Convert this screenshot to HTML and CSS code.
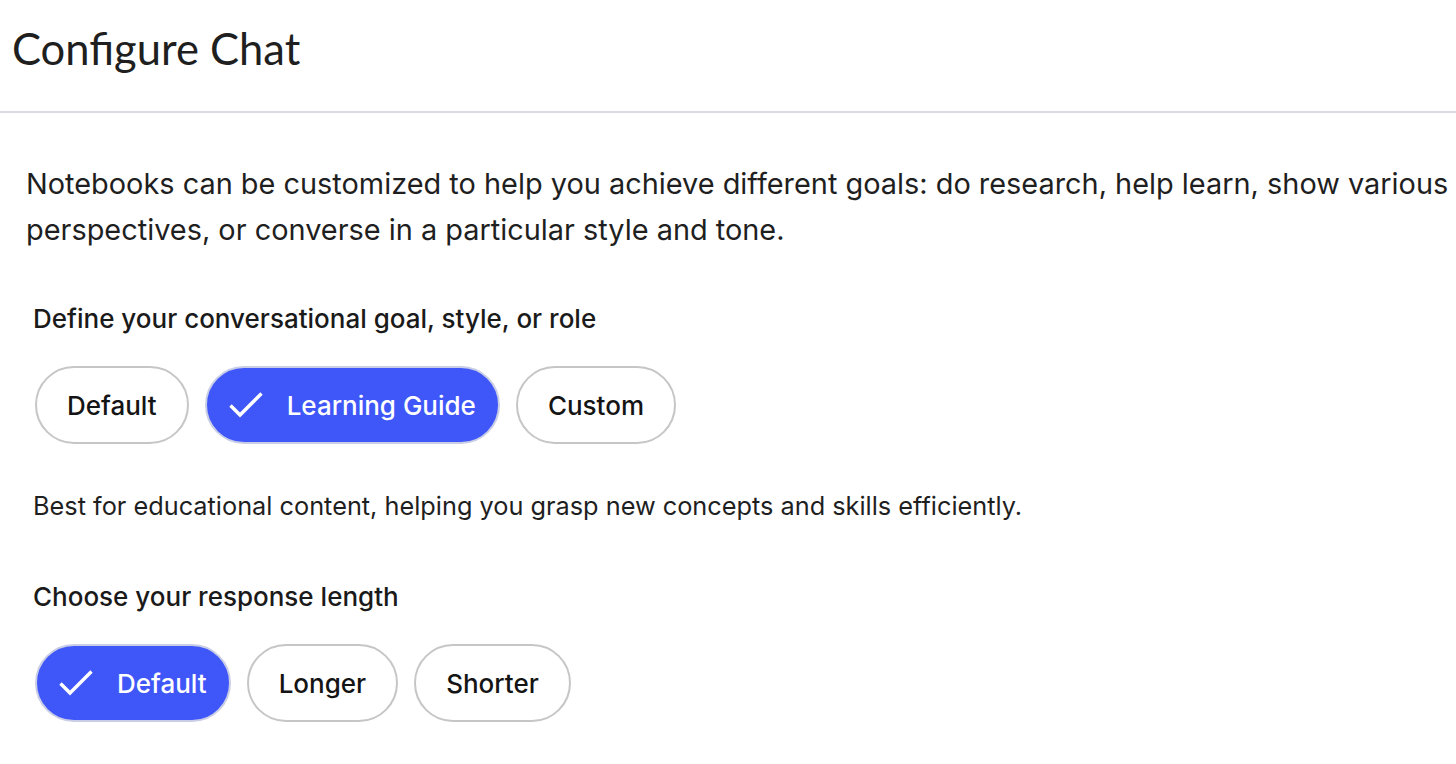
FILE: index.html
```html
<!DOCTYPE html>
<html lang="en">
<head>
<meta charset="utf-8">
<title>Configure Chat</title>
<link rel="stylesheet" href="styles.css">
</head>
<body>
<div class="dialog">
  <header class="dialog-header">
    <h1 class="dialog-title">Configure Chat</h1>
  </header>
  <main class="dialog-body">
    <p class="intro">Notebooks can be customized to help you achieve different goals: do research, help learn, show various perspectives, or converse in a particular style and tone.</p>

    <section class="group group-goal">
      <h2 class="group-label">Define your conversational goal, style, or role</h2>
      <div class="chips">
        <button class="chip">Default</button>
        <button class="chip chip-selected">
          <svg class="check" viewBox="0 0 34 26" aria-hidden="true"><path d="M1.5 13.5L11 23L32.5 1.5" /></svg>
          Learning Guide
        </button>
        <button class="chip">Custom</button>
      </div>
      <p class="hint">Best for educational content, helping you grasp new concepts and skills efficiently.</p>
    </section>

    <section class="group group-length">
      <h2 class="group-label">Choose your response length</h2>
      <div class="chips">
        <button class="chip chip-selected">
          <svg class="check" viewBox="0 0 34 26" aria-hidden="true"><path d="M1.5 13.5L11 23L32.5 1.5" /></svg>
          Default
        </button>
        <button class="chip">Longer</button>
        <button class="chip">Shorter</button>
      </div>
    </section>
  </main>
</div>
</body>
</html>
```

FILE: styles.css
```css
html, body {
  margin: 0;
  padding: 0;
  background: #ffffff;
}

body {
  font-family: Inter, Roboto, "Liberation Sans", Arial, sans-serif;
  color: #1f1f1f;
  overflow: hidden;
}

.dialog-header {
  height: 113px;
  border-bottom: 2px solid #dadbe0;
  box-sizing: border-box;
  padding: 22px 0 0 12px;
}

.dialog-title {
  margin: 0;
  font-family: Lato, Roboto, sans-serif;
  font-weight: 400;
  font-size: 43.5px;
  line-height: 52px;
  color: #1f1f1f;
}

.dialog-body {
  padding: 0 0 0 35px;
}

.intro {
  margin: 48px 0 0 -9px;
  font-size: 28.9px;
  line-height: 46px;
  width: 1450px;
  color: #1f1f1f;
}

.group-label {
  margin: 0 0 0 -2px;
  font-size: 26px;
  font-weight: 500;
  line-height: 32px;
  color: #1a1a1a;
}

.group-goal .group-label {
  margin-top: 50px;
}

.group-length .group-label {
  margin-top: 59px;
}

.chips {
  display: flex;
  gap: 16px;
  margin-top: 31px;
}

.chip {
  display: inline-flex;
  align-items: center;
  gap: 24px;
  height: 78px;
  padding: 0 30px;
  border: 2px solid #c6c6c6;
  border-radius: 39px;
  background: #ffffff;
  font-family: Inter, Roboto, "Liberation Sans", Arial, sans-serif;
  font-size: 26px;
  font-weight: 500;
  color: #141414;
  box-sizing: border-box;
  cursor: pointer;
}

.chip-selected {
  background: #3f57f9;
  border-color: #c9cde6;
  color: #ffffff;
  padding: 0 22px 0 22px;
}

.check {
  width: 34px;
  height: 26px;
  fill: none;
  stroke: #ffffff;
  stroke-width: 3.4;
  stroke-linecap: butt;
  stroke-linejoin: miter;
}

.hint {
  margin: 46px 0 0 -2px;
  font-size: 25.3px;
  line-height: 32px;
  color: #1f1f1f;
}
```
